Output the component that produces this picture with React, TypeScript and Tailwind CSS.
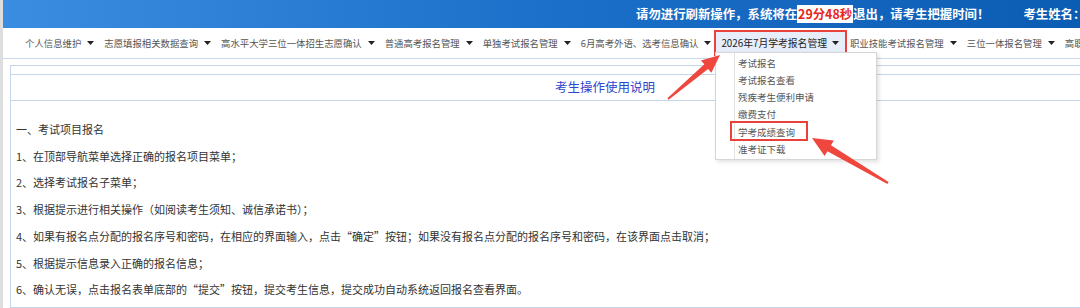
import React from "react";

const navItems = [
  { label: "个人信息维护" },
  { label: "志愿填报相关数据查询" },
  { label: "高水平大学三位一体招生志愿确认" },
  { label: "普通高考报名管理" },
  { label: "单独考试报名管理" },
  { label: "6月高考外语、选考信息确认" },
];

const navItemsAfter = ["职业技能考试报名管理", "三位一体报名管理", "高职提前招生"];

const menuItems = ["考试报名", "考试报名查看", "残疾考生便利申请", "缴费支付", "学考成绩查询", "准考证下载"];

const lines = [
  "一、考试项目报名",
  "1、在顶部导航菜单选择正确的报名项目菜单；",
  "2、选择考试报名子菜单；",
  "3、根据提示进行相关操作（如阅读考生须知、诚信承诺书）；",
  "4、如果有报名点分配的报名序号和密码，在相应的界面输入，点击“确定”按钮；如果没有报名点分配的报名序号和密码，在该界面点击取消；",
  "5、根据提示信息录入正确的报名信息；",
  "6、确认无误，点击报名表单底部的“提交”按钮，提交考生信息，提交成功自动系统返回报名查看界面。",
];

function Caret() {
  return (
    <svg width="7" height="4" viewBox="0 0 7 4" className="shrink-0">
      <polygon points="0,0 7,0 3.5,4" fill="#222" />
    </svg>
  );
}

export default function App() {
  return (
    <div className="relative w-[1080px] h-[308px] overflow-hidden bg-white font-['Noto_Sans_CJK_SC',sans-serif]">
      <div className="flex h-full">
        <div className="w-[3px] shrink-0 bg-[#dedede]" />
        <div className="flex-1 min-w-0 flex flex-col">
          {/* header bar */}
          <div className="h-[28px] shrink-0 flex items-center whitespace-nowrap bg-gradient-to-r from-[#3a8de0] via-[#1c70c9] to-[#0b5cb3] text-white font-bold text-[12.4px]">
            <span className="ml-[633px]">
              请勿进行刷新操作，系统将在<span className="bg-white text-[#e8261c] px-[1px]">29分48秒</span>退出，请考生把握时间！
            </span>
            <span className="ml-[34px]">考生姓名：</span>
          </div>

          {/* nav */}
          <div className="h-[31px] shrink-0 flex items-center whitespace-nowrap border-b border-[#c9d8ea] pl-[22px] text-[9.4px] text-[#555]">
            {navItems.map((item, i) => (
              <div key={i} className={`flex items-center ${i === navItems.length - 1 ? "mr-[3px]" : "mr-[10px]"}`}>
                <span>{item.label}</span>
                <span className="ml-[6px] flex"><Caret /></span>
              </div>
            ))}
            <div className="flex items-center h-[26px] pl-[5px] pr-[6px] mr-[3px] border-2 border-[#e8423a] bg-[#e7eefa] text-[9.8px] text-[#222]">
              <span>2026年7月学考报名管理</span>
              <span className="ml-[5px] flex"><Caret /></span>
            </div>
            {navItemsAfter.map((label, i) => (
              <div key={i} className="flex items-center mr-[10px]">
                <span>{label}</span>
                <span className="ml-[6px] flex"><Caret /></span>
              </div>
            ))}
          </div>

          {/* content */}
          <div className="flex-1 min-h-0 pt-[6px] pl-[7px]">
            <div className="w-[1190px] h-full border border-[#c5d6ea] flex flex-col">
              <div className="h-[9px] border-b border-[#c5d6ea]" />
              <div className="h-[26px] border-b border-[#c5d6ea] flex items-center justify-center text-[12.5px] text-[#2b45cc]">
                考生操作使用说明
              </div>
              <div className="pt-[15px] pl-[5px] flex flex-col text-[11px] text-[#333] whitespace-nowrap">
                {lines.map((l, i) => (
                  <div key={i} className="leading-[26.7px]">{l}</div>
                ))}
              </div>
            </div>
          </div>
        </div>
      </div>

      {/* dropdown menu */}
      <div className="absolute left-[715px] top-[52px] w-[162px] h-[108px] bg-white border border-[#d6d6d6] shadow-[2px_2px_4px_rgba(0,0,0,0.12)] flex">
        <div className="w-[19px] border-r border-[#e3e3e3]" />
        <div className="pl-[3px] pt-[1.5px] flex flex-col text-[9.5px] text-[#555]">
          {menuItems.map((m) => (
            <div key={m} className="leading-[17.3px] whitespace-nowrap">{m}</div>
          ))}
        </div>
        <div className="absolute left-[14px] top-[68px] w-[78px] h-[20px] border-2 border-[#e8423a]" />
      </div>

      {/* annotation arrows */}
      <svg className="absolute inset-0 pointer-events-none" width="1080" height="308" viewBox="0 0 1080 308">
        <polygon
          points="668.6,99.8 708.1,68.9 711.4,72.7 720,55 701.0,60.5 704.3,64.3 667.4,98.2"
          fill="#ef463d"
        />
        <polygon
          points="888.6,182.0 831.0,145.2 833.8,140.5 812,138 824.6,155.9 827.4,151.2 887.4,184.0"
          fill="#ef463d"
        />
      </svg>
    </div>
  );
}
